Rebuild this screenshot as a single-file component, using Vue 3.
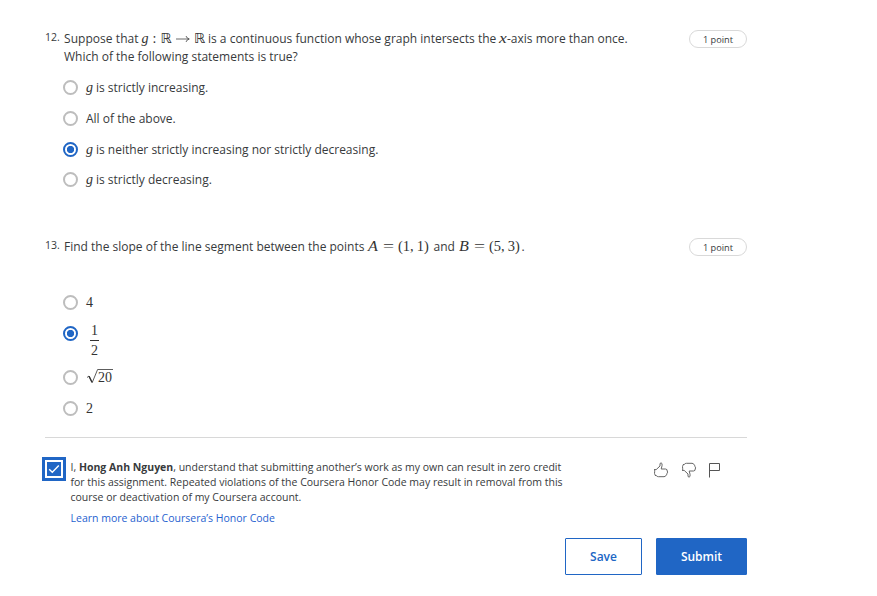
<script setup>
import { ref } from 'vue'

const first = ref(2)
const second = ref(1)
const functionOptions = [
  { variable: true, text: 'is strictly increasing.' },
  { variable: false, text: 'All of the above.' },
  { variable: true, text: 'is neither strictly increasing nor strictly decreasing.' },
  { variable: true, text: 'is strictly decreasing.' },
]
const slopeOptions = ['4', 'half', 'root', '2']
</script>

<template>
  <main class="quiz">
    <section class="question question-first">
      <span class="number">12.</span>
      <div class="body">
        <p class="prompt with-math">
          <span class="lead">Suppose that</span>
          <span class="math signature"><i class="mg">g</i><span class="colon">:</span><span class="set">ℝ</span><svg class="arrow" viewBox="0 0 14 8"><path d="M0 4H13M10 1Q10.8 3.5 13.3 4Q10.8 4.5 10 7" /></svg><span class="set">ℝ</span></span>
          <span class="middle">is a continuous function whose graph intersects the</span>
          <i class="math mx">x</i><span class="tail">-axis more than once.</span>
        </p>
        <p class="prompt">Which of the following statements is true?</p>
        <div class="options">
          <label v-for="(option, index) in functionOptions" :key="index" class="option" @click="first = index">
            <span class="radio" :class="{ selected: first === index }"></span>
            <i v-if="option.variable" class="math mg">g</i>
            <span class="answer">{{ option.text }}</span>
          </label>
        </div>
      </div>
      <span class="points">1 point</span>
    </section>

    <section class="question question-second">
      <span class="number">13.</span>
      <div class="body">
        <p class="prompt with-math">
          <span class="slope">Find the slope of the line segment between the points</span>
          <span class="math equation eq-a"><i>A</i><b class="equals">=</b><span class="pair">(1,<span class="thin"></span>1)</span></span>
          <span class="and">and</span>
          <span class="math equation eq-b"><i>B</i><b class="equals">=</b><span class="pair">(5,<span class="thin"></span>3)</span></span><span>.</span>
        </p>
        <div class="options numeric">
          <label v-for="(value, index) in slopeOptions" :key="value" class="option" :class="{ tall: value === 'half' }" @click="second = index">
            <span class="radio" :class="{ selected: second === index }"></span>
            <span v-if="value === 'half'" class="math fraction"><span>1</span><span class="denominator">2</span></span>
            <span v-else-if="value === 'root'" class="math root"><svg viewBox="0 0 27 16"><path class="thin-stroke" d="M1 9.5L3 8L6.2 14.6L11.6 1.5H27" /><path class="thick-stroke" d="M3 8.2L6 14.2" /></svg><span class="radicand">20</span></span>
            <span v-else class="math">{{ value }}</span>
          </label>
        </div>
      </div>
      <span class="points">1 point</span>
    </section>

    <section class="honor">
      <span class="check"><span class="check-box"><svg viewBox="0 0 14 14"><path d="M2.2 7.2L5.3 10.2L11.8 3.6" /></svg></span></span>
      <div class="pledge">
        <p>I, <strong>Hong Anh Nguyen</strong>, understand that submitting another’s work as my own can result in zero credit</p>
        <p>for this assignment. Repeated violations of the Coursera Honor Code may result in removal from this</p>
        <p>course or deactivation of my Coursera account.</p>
        <a class="learn">Learn more about Coursera’s Honor Code</a>
      </div>
      <div class="feedback">
        <svg class="thumb" viewBox="0 0 16 16"><path d="M1 7.6H3.2L7 4V1.5Q8.2.2 9 1.6Q9.5 3 8.2 7H12.5Q14.5 7.2 14.2 9Q15.2 10 14 11.4Q14.3 12.6 13 13.2Q12.7 14.7 11 14.7H5.5Q4 14.7 3.2 13.5H2M1 7.6Q2.1 8 1.7 9.2Q1 11.4 2.3 13.5" /></svg>
        <svg class="thumb down" viewBox="0 0 16 16"><path d="M1 7.6H3.2L7 4V1.5Q8.2.2 9 1.6Q9.5 3 8.2 7H12.5Q14.5 7.2 14.2 9Q15.2 10 14 11.4Q14.3 12.6 13 13.2Q12.7 14.7 11 14.7H5.5Q4 14.7 3.2 13.5H2M1 7.6Q2.1 8 1.7 9.2Q1 11.4 2.3 13.5" /></svg>
        <svg class="flag" viewBox="0 0 13 16"><path d="M1.5 15.5V1.5H11.5V8.5H1.5" /></svg>
      </div>
    </section>

    <footer class="actions">
      <button class="save"><span>Save</span></button>
      <button class="submit"><span>Submit</span></button>
    </footer>
  </main>
</template>

<style>
body { background: #fff; }
</style>

<style scoped>
.quiz { width: 702px; margin-left: 45px; padding-top: 30px; font-family: "Open Sans", sans-serif; font-size: 12px; color: #373a3c; }
p { margin: 0; }
.question { display: flex; align-items: flex-start; }
.question-first { height: 208px; }
.question-second { height: 199px; border-bottom: 1px solid #d8d8d8; }
.number { width: 19px; font-size: 10.5px; line-height: 15px; }
.body { flex: 1; }
.prompt { display: flex; align-items: baseline; height: 18px; line-height: 18px; white-space: nowrap; }
.with-math { line-height: 16px; }
.points { box-sizing: border-box; width: 58px; height: 18px; border: 1px solid #d9d9d9; border-radius: 9px; text-align: center; font-size: 9.2px; line-height: 17px; }
.math { font-family: "Liberation Serif", serif; font-size: 14px; color: #333; }
.lead { width: 77.5px; letter-spacing: .05px; }
.mg { width: 10px; }
.signature { display: flex; align-items: baseline; width: 66.5px; }
.signature .mg { width: 11px; }
.colon { width: 8px; }
.set { font-family: "DejaVu Sans", sans-serif; font-size: 14px; width: 14px; }
.arrow { width: 14px; height: 8px; margin: 0 4.5px 0 1px; fill: none; stroke: #444; stroke-width: .8; }
.middle { width: 291px; }
.mx { width: 8px; transform: scaleX(1.25); transform-origin: left; }
.options { padding-top: 7px; }
.option { display: flex; align-items: flex-start; height: 30.8px; line-height: 18px; padding-top: 6px; box-sizing: border-box; white-space: nowrap; }
.radio { box-sizing: border-box; width: 15px; height: 15px; margin: 1px 8px 0 -1px; border: 2px solid #bdbdbd; border-radius: 50%; }
.radio.selected { border-color: #2066c5; background: radial-gradient(circle, #2066c5 0 3.3px, #fff 4px); }
.answer { line-height: 18px; }
.slope { width: 304px; }
.equation { display: flex; align-items: baseline; }
.eq-a { width: 65.5px; }
.eq-b { width: 62.5px; }
.equals { width: 15px; font-weight: 400; text-align: left; transform: scaleX(1.4); transform-origin: left; }
.equation i { width: 15px; transform: scaleX(1.15); transform-origin: left; }
.pair { font-size: 14.5px; }
.thin { display: inline-block; width: 3px; }
.and { width: 25.5px; }
.numeric { padding-top: 32px; }
.numeric .radio { margin-top: .5px; }
.numeric .tall .radio { margin-top: 1px; }
.tall { height: 44.5px; }
.fraction { display: flex; flex-direction: column; width: 9px; margin: -3px 0 0 4px; text-align: center; line-height: 18px; }
.denominator { border-top: 1px solid #333; line-height: 19px; }
.root { position: relative; width: 27px; height: 18px; }
.root svg { position: absolute; left: 0; top: -1px; width: 27px; height: 16px; fill: none; stroke: #333; }
.thin-stroke { stroke-width: .8; }
.thick-stroke { stroke-width: 1.4; }
.radicand { margin-left: 12px; }
.honor { display: flex; align-items: flex-start; height: 81px; padding-top: 19px; }
.check { box-sizing: border-box; width: 24px; height: 24px; margin-left: -3px; border: 3px solid #2066c5; padding: 2px; }
.check-box { display: block; width: 14px; height: 14px; background: #2066c5; }
.check-box svg { display: block; fill: none; stroke: #fff; stroke-width: 1.4; }
.pledge { width: 587px; padding: 3px 0 0 4.5px; box-sizing: border-box; font-size: 10.51px; line-height: 15px; white-space: nowrap; }
.learn { display: block; margin-top: 6px; color: #1f62d0; }
.feedback { display: flex; gap: 12px; padding-top: 5px; }
.feedback svg { width: 16px; height: 16px; fill: none; stroke: #666; stroke-width: 1; }
.feedback .flag { width: 13px; margin-left: -1px; stroke: #555; }
.thumb.down { transform: scaleY(-1); }
.actions { display: flex; justify-content: flex-end; gap: 14px; }
button { box-sizing: border-box; height: 37px; border: 1px solid #2066c5; border-radius: 1px; padding: 0; font: 600 12px "Open Sans", sans-serif; }
.save { width: 77px; color: #2066c5; background: #fff; }
.submit { width: 91px; color: #fff; background: #2066c5; }
</style>
